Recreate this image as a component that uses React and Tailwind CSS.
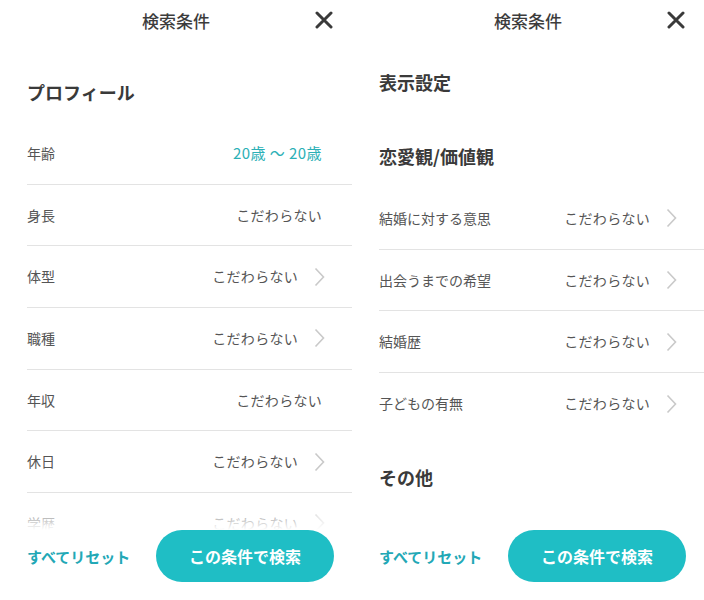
const FONT = { fontFamily: '"Noto Sans CJK JP", "Noto Sans", sans-serif' };

function Chevron() {
  return (
    <svg width="11" height="20" viewBox="0 0 11 20" className="ml-[16px] shrink-0">
      <path d="M1.5 1.5 L9.5 10 L1.5 18.5" fill="none" stroke="#c9c9c9" strokeWidth="1.6" />
    </svg>
  );
}

function Row({ label, value, chevron, teal, last, faded }) {
  return (
    <div
      className={`ml-[27px] flex h-[61.7px] items-center justify-between ${last ? "" : "border-b border-[#e3e3e3]"} ${
        chevron ? "pr-[27px]" : "pr-[30px]"
      } ${faded ? "opacity-40" : ""}`}
    >
      <span className="text-[14px] text-[#555]">{label}</span>
      <div className="flex items-center">
        <span className={teal ? "text-[15px] tracking-[0.03em] text-[#2bb0b6]" : "text-[14px] tracking-[0.02em] text-[#555]"}>
          {value}
        </span>
        {chevron && <Chevron />}
      </div>
    </div>
  );
}

function Heading({ children, className = "" }) {
  return <h2 className={`px-[27px] text-[18px] font-bold leading-[26px] text-[#3a3a3a] ${className}`}>{children}</h2>;
}

function Header() {
  return (
    <div className="relative flex h-[42px] items-center justify-center">
      <span className="text-[17px] font-medium text-[#3c3c3c]">検索条件</span>
      <svg width="18" height="18" viewBox="0 0 18 18" className="absolute right-[19px] top-[11px]">
        <path d="M2 2 L16 16 M16 2 L2 16" stroke="#3a3a3a" strokeWidth="3" strokeLinecap="round" />
      </svg>
    </div>
  );
}

function Footer() {
  return (
    <div className="absolute inset-x-0 bottom-0">
      <div className="h-[30px] bg-gradient-to-b from-white/0 to-white" />
      <div className="flex h-[70px] items-start bg-white pl-[27px] pr-[18px]">
        <span className="mt-[16px] text-[15px] font-bold text-[#22a8b6]">すべてリセット</span>
        <button className="ml-auto flex h-[52px] w-[178px] items-center justify-center rounded-full bg-[#1fbec5] text-[16px] font-bold text-white">
          この条件で検索
        </button>
      </div>
    </div>
  );
}

const NONE = "こだわらない";

export default function App() {
  return (
    <div className="flex w-[704px] bg-white" style={FONT}>
      <div className="relative h-[600px] w-[352px] overflow-hidden">
        <Header />
        <Heading className="mt-[37px] mb-[18px]">プロフィール</Heading>
        <Row label="年齢" value="20歳 〜 20歳" teal />
        <Row label="身長" value={NONE} />
        <Row label="体型" value={NONE} chevron />
        <Row label="職種" value={NONE} chevron />
        <Row label="年収" value={NONE} />
        <Row label="休日" value={NONE} chevron />
        <Row label="学歴" value={NONE} chevron />
        <Footer />
      </div>
      <div className="relative h-[600px] w-[352px] overflow-hidden">
        <Header />
        <Heading className="mt-[27px]">表示設定</Heading>
        <Heading className="mt-[48px] mb-[19px]">恋愛観/価値観</Heading>
        <Row label="結婚に対する意思" value={NONE} chevron />
        <Row label="出会うまでの希望" value={NONE} chevron />
        <Row label="結婚歴" value={NONE} chevron />
        <Row label="子どもの有無" value={NONE} chevron last />
        <Heading className="mt-[29px]">その他</Heading>
        <Footer />
      </div>
    </div>
  );
}
